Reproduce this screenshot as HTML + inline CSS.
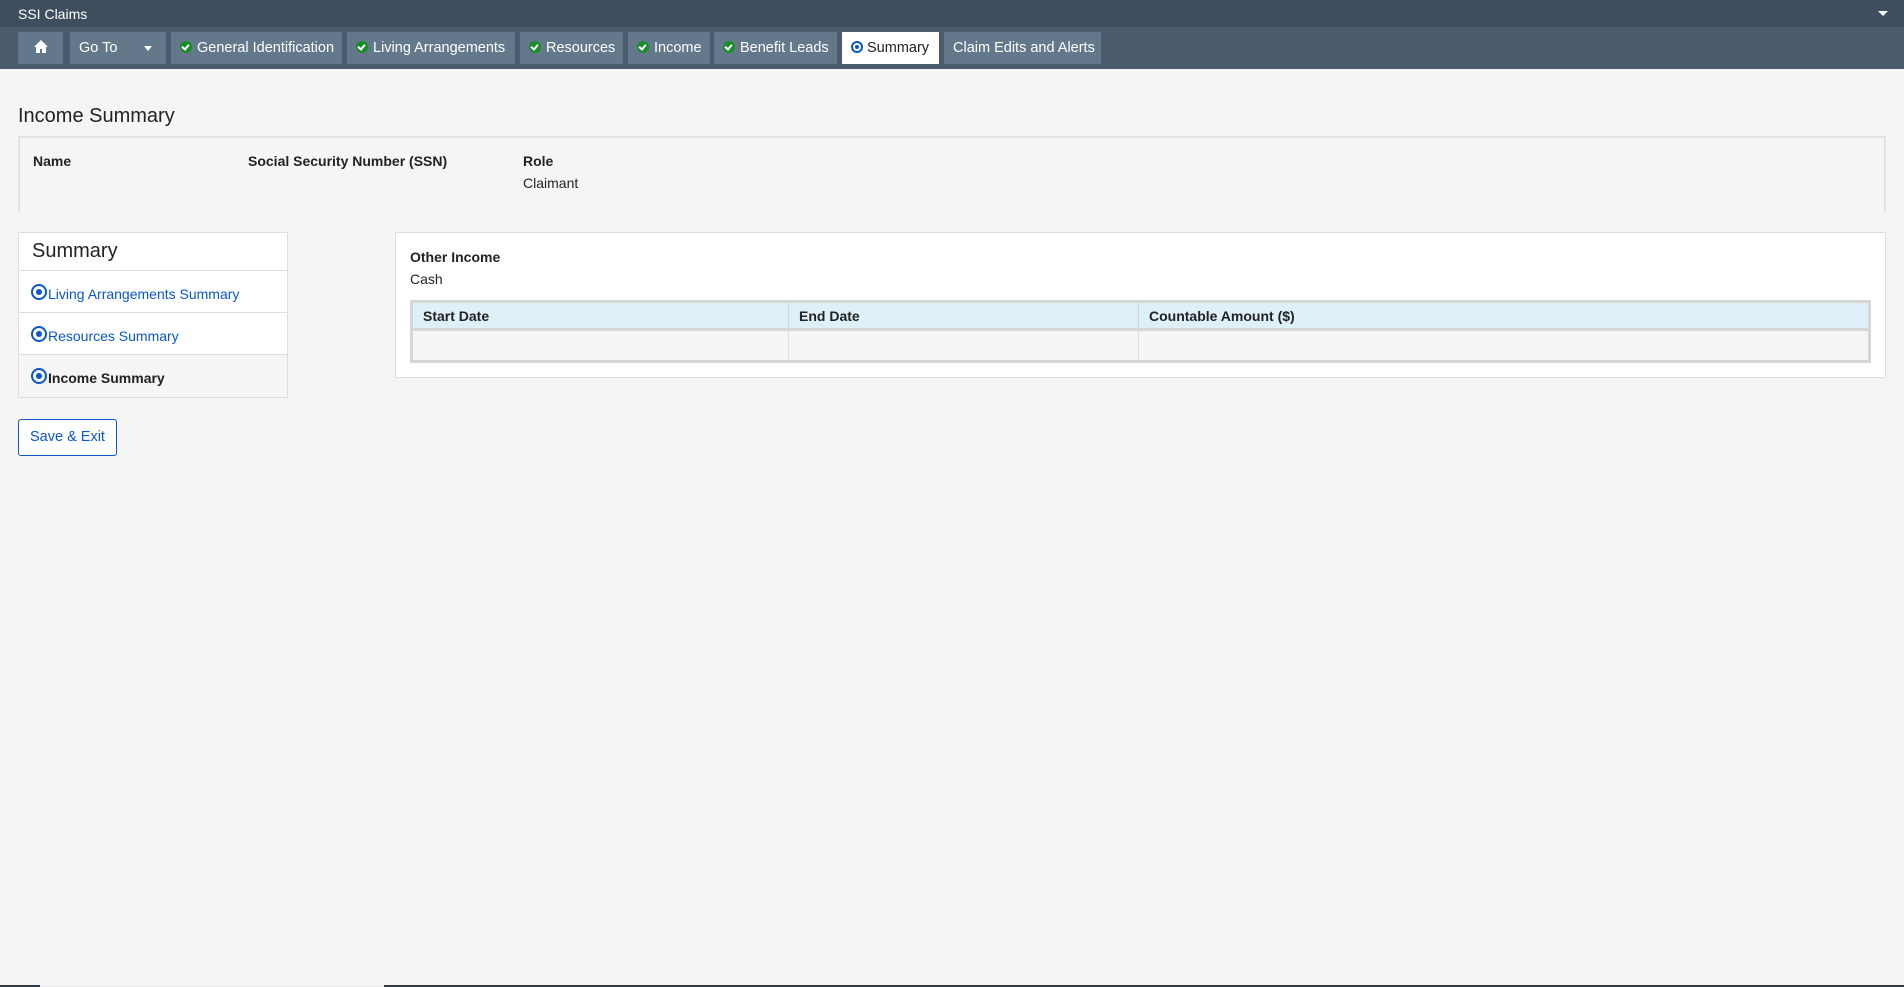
<!DOCTYPE html>
<html><head><style>
*{box-sizing:border-box;margin:0;padding:0}
body{width:1904px;height:987px;background:#f5f5f5;font-family:"Liberation Sans",Arial,sans-serif;font-size:14px;color:#222;position:relative;overflow:hidden}
.top{position:absolute;left:0;top:0;width:1904px;height:27px;background:#3f4e5e;color:#fff;font-size:14px;padding:6px 0 0 18px}
.caret{position:absolute;right:16px;top:11px;border-left:5px solid transparent;border-right:5px solid transparent;border-top:5px solid #fff}
.nav{position:absolute;left:0;top:27px;width:1904px;height:42px;background:#4a5b6e}
.tab{position:absolute;top:5px;height:32px;background:#64788c;color:#fff;font-size:14.5px;line-height:33px;padding-left:9px;white-space:nowrap}
.tab.act{background:#fff;color:#222}
.ck{display:inline-block;width:12px;height:12px;border-radius:50%;background:#1a8c2a;vertical-align:-1px;margin-right:5px;position:relative}
.ck:after{content:"";position:absolute;left:3px;top:2px;width:3px;height:5px;border:solid #fff;border-width:0 2px 2px 0;transform:rotate(40deg)}
.rd{display:inline-block;width:16px;height:16px;border-radius:50%;border:2px solid #0a57c9;position:relative;vertical-align:-1px;margin-right:1px}
.rd:after{content:"";position:absolute;left:3px;top:3px;width:6px;height:6px;border-radius:50%;background:#0a57c9}
.rd2{display:inline-block;width:12px;height:12px;border-radius:50%;border:2px solid #0a57c9;position:relative;vertical-align:-1px;margin-right:4px}
.rd2:after{content:"";position:absolute;left:2px;top:2px;width:4px;height:4px;border-radius:50%;background:#0a57c9}
h1{position:absolute;left:18px;top:105px;font-size:20px;font-weight:normal;color:#222}
.info{position:absolute;left:18px;top:136px;width:1868px;height:76px;border:2px solid #e2e2e2;border-bottom:none}
.lbl{position:absolute;font-weight:bold;font-size:14px;top:15px}
.side{position:absolute;left:18px;top:232px;width:270px;height:166px;border:1px solid #ddd;background:#fff}
.side .h{height:38px;font-size:20px;padding:7px 0 0 13px;border-bottom:1px solid #ddd}
.side .it{height:42px;padding:13px 0 0 12px;border-bottom:1px solid #ddd;color:#0a57c9;font-size:14px}
.side .it.sel{background:#f5f5f5;color:#222;font-weight:bold;border-bottom:none}
.btn{position:absolute;left:18px;top:419px;width:99px;height:37px;border:1px solid #0a57c9;border-radius:3px;background:#fff;color:#0a57c9;font-size:14.5px;line-height:35px;text-align:center}
.panel{position:absolute;left:395px;top:232px;width:1491px;height:146px;background:#fff;border:1px solid #ddd}
table{position:absolute;left:14px;top:67px;width:1461px;border-collapse:collapse;border:3px solid #d6d6d6}
th{background:#dff1f8;text-align:left;height:28px;font-size:14px;padding-left:10px;border-right:1px solid #d6d6d6;border-bottom:3px solid #d6d6d6}
td{background:#f5f5f5;height:32px;border-right:1px solid #ddd}
.bot{position:absolute;left:0;top:985px;width:1904px;height:2px;background:#2e3c48}
</style></head><body>
<div class="top">SSI Claims<span class="caret"></span></div>
<div class="nav">
<div class="tab" style="left:18px;width:45px;padding:0;text-align:center"><svg width="16" height="15" viewBox="0 0 16 15" style="vertical-align:-2px"><path d="M8 1L1 8h2v6h4v-4h2v4h4V8h2z" fill="#fff"/></svg></div>
<div class="tab" style="left:70px;width:96px">Go To<span style="position:absolute;right:14px;top:14px;border-left:4px solid transparent;border-right:4px solid transparent;border-top:5px solid #fff"></span></div>
<div class="tab" style="left:171px;width:171px"><span class="ck"></span>General Identification</div>
<div class="tab" style="left:347px;width:168px"><span class="ck"></span>Living Arrangements</div>
<div class="tab" style="left:520px;width:103px"><span class="ck"></span>Resources</div>
<div class="tab" style="left:628px;width:82px"><span class="ck"></span>Income</div>
<div class="tab" style="left:714px;width:123px"><span class="ck"></span>Benefit Leads</div>
<div class="tab act" style="left:842px;width:97px"><span class="rd2"></span>Summary</div>
<div class="tab" style="left:944px;width:157px">Claim Edits and Alerts</div>
</div>
<h1>Income Summary</h1>
<div class="info">
<div class="lbl" style="left:13px">Name</div>
<div class="lbl" style="left:228px">Social Security Number (SSN)</div>
<div class="lbl" style="left:503px">Role</div>
<div style="position:absolute;left:503px;top:37px">Claimant</div>
</div>
<div class="side">
<div class="h">Summary</div>
<div class="it"><span class="rd"></span>Living Arrangements Summary</div>
<div class="it"><span class="rd"></span>Resources Summary</div>
<div class="it sel"><span class="rd"></span>Income Summary</div>
</div>
<div class="btn">Save &amp; Exit</div>
<div class="panel">
<div style="position:absolute;left:14px;top:16px;font-weight:bold">Other Income</div>
<div style="position:absolute;left:14px;top:38px">Cash</div>
<table><tr><th style="width:377px">Start Date</th><th style="width:350px">End Date</th><th>Countable Amount ($)</th></tr>
<tr><td></td><td></td><td></td></tr></table>
</div>
<div class="bot"></div>
<div style="position:absolute;left:40px;top:985px;width:344px;height:2px;background:#eee"></div>
</body></html>
